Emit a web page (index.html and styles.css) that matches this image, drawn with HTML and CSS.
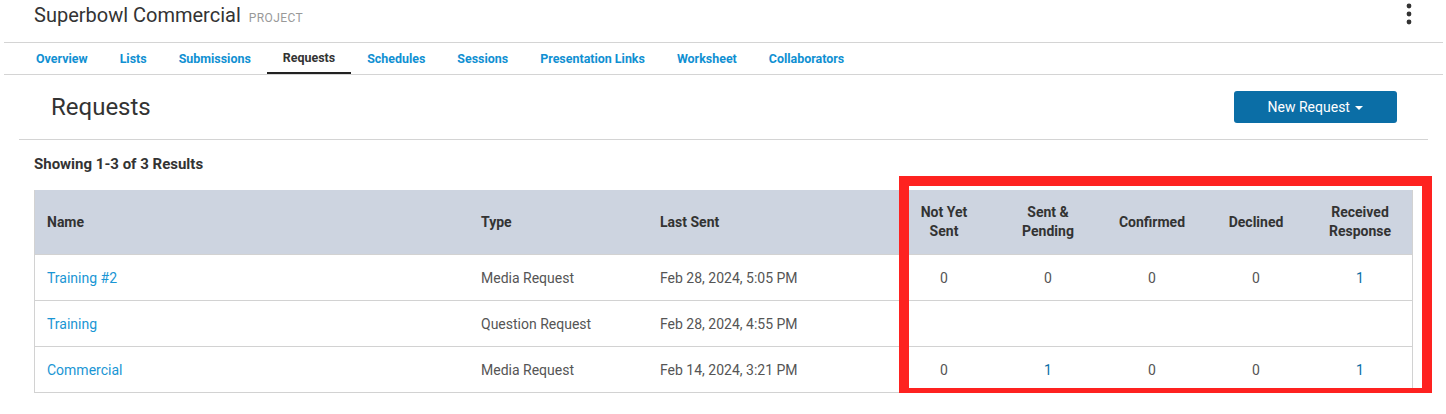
FILE: index.html
```html
<!DOCTYPE html>
<html lang="en">
<head>
  <meta charset="UTF-8">
  <title>Superbowl Commercial - Requests</title>
  <link rel="stylesheet" href="styles.css">
</head>
<body>
  <header class="project-header">
    <h1 class="project-title">Superbowl Commercial <span class="project-kind">PROJECT</span></h1>
    <button class="kebab" aria-label="More">
      <svg width="6" height="22" viewBox="0 0 6 22">
        <circle cx="3" cy="3" r="2.4" fill="#333"/>
        <circle cx="3" cy="11" r="2.4" fill="#333"/>
        <circle cx="3" cy="19" r="2.4" fill="#333"/>
      </svg>
    </button>
  </header>

  <nav class="tabs">
    <a href="#">Overview</a>
    <a href="#">Lists</a>
    <a href="#">Submissions</a>
    <a href="#" class="active">Requests</a>
    <a href="#">Schedules</a>
    <a href="#">Sessions</a>
    <a href="#">Presentation Links</a>
    <a href="#">Worksheet</a>
    <a href="#">Collaborators</a>
  </nav>

  <div class="page-head">
    <h2>Requests</h2>
    <button class="new-btn">New Request <span class="caret"></span></button>
  </div>

  <main class="content">
    <p class="results">Showing 1-3 of 3 Results</p>

    <div class="table-wrap">
      <table class="requests">
        <thead>
          <tr>
            <th class="col-name">Name</th>
            <th class="col-type">Type</th>
            <th class="col-sent">Last Sent</th>
            <th class="num">Not Yet<br>Sent</th>
            <th class="num">Sent &amp;<br>Pending</th>
            <th class="num">Confirmed</th>
            <th class="num">Declined</th>
            <th class="num">Received<br>Response</th>
          </tr>
        </thead>
        <tbody>
          <tr>
            <td><a href="#" class="name-link">Training #2</a></td>
            <td>Media Request</td>
            <td>Feb 28, 2024, 5:05 PM</td>
            <td class="num">0</td>
            <td class="num">0</td>
            <td class="num">0</td>
            <td class="num">0</td>
            <td class="num"><a href="#" class="count-link">1</a></td>
          </tr>
          <tr>
            <td><a href="#" class="name-link">Training</a></td>
            <td>Question Request</td>
            <td>Feb 28, 2024, 4:55 PM</td>
            <td class="num"></td>
            <td class="num"></td>
            <td class="num"></td>
            <td class="num"></td>
            <td class="num"></td>
          </tr>
          <tr>
            <td><a href="#" class="name-link">Commercial</a></td>
            <td>Media Request</td>
            <td>Feb 14, 2024, 3:21 PM</td>
            <td class="num">0</td>
            <td class="num"><a href="#" class="count-link">1</a></td>
            <td class="num">0</td>
            <td class="num">0</td>
            <td class="num"><a href="#" class="count-link">1</a></td>
          </tr>
        </tbody>
      </table>
      <div class="highlight"></div>
    </div>
  </main>
</body>
</html>
```

FILE: styles.css
```css
body {
  margin: 0;
  background: #fff;
  color: #333;
  font-family: Roboto, "Liberation Sans", sans-serif;
}
a {
  text-decoration: none;
}

.project-header {
  display: flex;
  justify-content: space-between;
  align-items: flex-start;
  height: 42px;
  padding: 0 34px;
}
.project-title {
  margin: 2px 0 0;
  font-size: 20px;
  font-weight: 400;
  line-height: 26px;
  color: #333;
}
.project-kind {
  margin-left: 3px;
  font-size: 12px;
  letter-spacing: 0.4px;
  color: #999;
}
.kebab {
  margin-top: 3px;
  padding: 0;
  border: none;
  background: none;
  line-height: 0;
  cursor: pointer;
}

.tabs {
  display: flex;
  margin: 0 3px 0 4px;
  padding-left: 16px;
  border-top: 1px solid #d4d4d4;
  border-bottom: 1px solid #d4d4d4;
}
.tabs a {
  display: block;
  height: 29px;
  padding: 0 16px;
  line-height: 32px;
  font-size: 12.45px;
  font-weight: 700;
  color: #1090d2;
  border-bottom: 2px solid transparent;
}
.tabs a.active {
  color: #333;
  border-bottom-color: #222;
  line-height: 29px;
}

.page-head {
  display: flex;
  justify-content: space-between;
  align-items: center;
  height: 64px;
  margin: 0 18px 0 19px;
  padding: 0 31px 0 32px;
  border-bottom: 1px solid #d4d4d4;
}
.page-head h2 {
  margin: 0;
  font-size: 24px;
  font-weight: 400;
  color: #333;
}
.new-btn {
  width: 163px;
  height: 32px;
  border: none;
  border-radius: 3px;
  background: #0b6ea6;
  color: #fff;
  font-family: inherit;
  font-size: 14px;
  cursor: pointer;
}
.caret {
  display: inline-block;
  margin-left: 2px;
  vertical-align: middle;
  border-top: 4px solid #fff;
  border-left: 4px solid transparent;
  border-right: 4px solid transparent;
}

.content {
  padding: 0 33px 0 34px;
}
.results {
  margin: 14px 0 16px;
  font-size: 15px;
  font-weight: 700;
  line-height: 20px;
  color: #333;
}

.table-wrap {
  position: relative;
}
.requests {
  width: 100%;
  border-collapse: collapse;
  border: 1px solid #d2d2d2;
  border-top: none;
  font-size: 14px;
}
.requests th {
  height: 64px;
  padding: 0 12px;
  background: #cdd4e0;
  font-weight: 700;
  line-height: 19px;
  color: #333;
  text-align: left;
}
.requests td {
  height: 45px;
  padding: 0 12px;
  border-top: 1px solid #d2d2d2;
  color: #555;
}
.requests .col-name { width: 410px; }
.requests .col-type { width: 155px; }
.requests .col-sent { width: 220px; }
.requests .num {
  width: 80px;
  text-align: center;
}
.name-link {
  color: #1a96d4;
}
.count-link {
  color: #0b6ea6;
}

.highlight {
  position: absolute;
  top: -14px;
  left: 865px;
  width: 513px;
  height: 202px;
  border: 10px solid #fe2220;
  pointer-events: none;
}
```
